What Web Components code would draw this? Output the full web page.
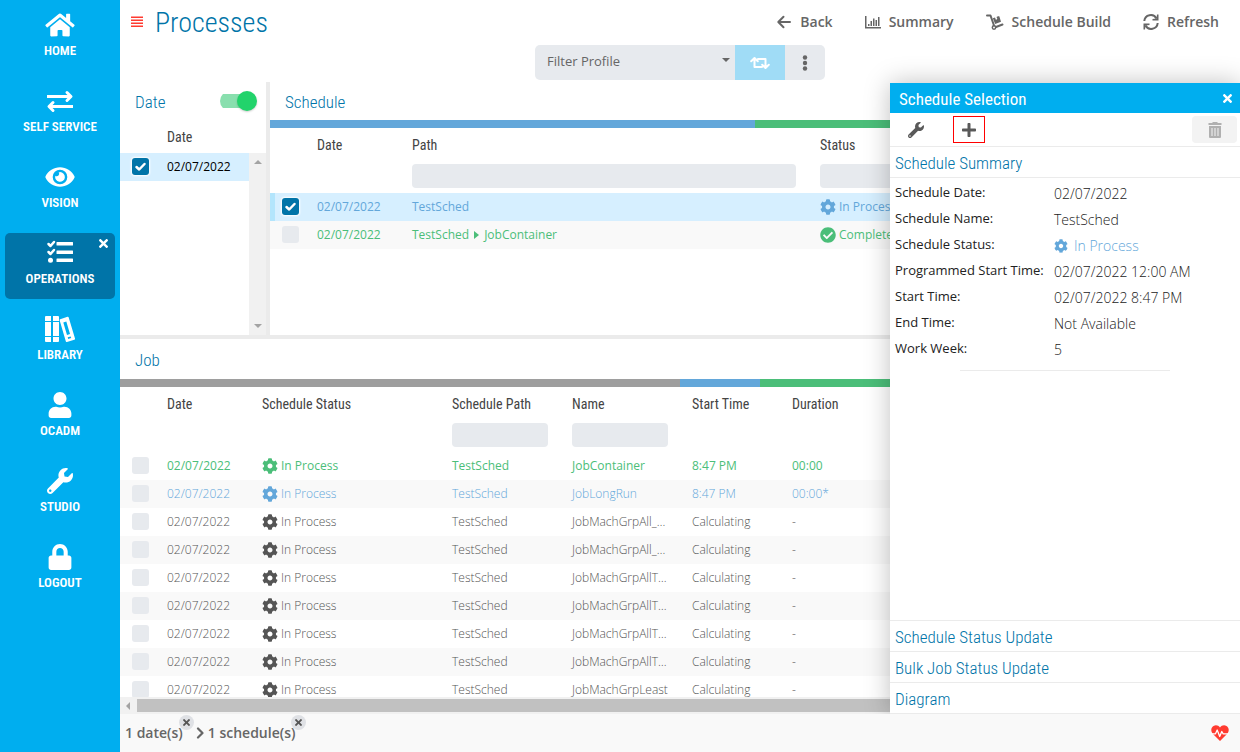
<!DOCTYPE html>
<html lang="en">
<head>
<meta charset="utf-8">
<title>Processes</title>
<meta name="viewport" content="width=device-width, initial-scale=1">
<style>
  html, body { margin: 0; height: 100%; }
  body {
    --head: "Roboto Condensed", "Liberation Sans Narrow", Roboto, sans-serif;
    --brand: #00aeef;
    --deep: #0074a8;
    --green: #4bbe79;
    --blue: #63a7da;
    --field: #e7eaee;
    --line: #ebebeb;
    --grey: #666;
    font-family: "Open Sans", sans-serif;
    font-size: 12px;
    color: #444;
    background: #fff;
  }
</style>
</head>
<body>
<process-app></process-app>
<script>
const ICONS = {
  home: ['0 0 576 512', '<path d="M280.37 148.26L96 300.11V464a16 16 0 0 0 16 16l112.06-.29a16 16 0 0 0 15.92-16V368a16 16 0 0 1 16-16h64a16 16 0 0 1 16 16v95.64a16 16 0 0 0 16 16.05L464 480a16 16 0 0 0 16-16V300L295.67 148.26a12.19 12.19 0 0 0-15.3 0zM571.6 251.47L488 182.56V44.05a12 12 0 0 0-12-12h-56a12 12 0 0 0-12 12v72.61L318.47 43a48 48 0 0 0-61 0L4.34 251.47a12 12 0 0 0-1.6 16.9l25.5 31A12 12 0 0 0 45.15 301l235.22-193.74a12.19 12.19 0 0 1 15.3 0L530.9 301a12 12 0 0 0 16.9-1.6l25.5-31a12 12 0 0 0-1.7-16.93z"/>'],
  swap: ['0 0 26 26', '<path fill="none" stroke="currentColor" stroke-width="3" d="M0 8.500H24M26 18.500H2"/><path fill="none" stroke="currentColor" stroke-width="3" stroke-linecap="round" stroke-linejoin="round" d="M20 4.500L24 8.500L20 12.500M6 14.500L2 18.500L6 22.500"/>'],
  eye: ['0 0 576 512', '<path d="M572.52 241.4C518.29 135.59 410.93 64 288 64S57.68 135.64 3.480 241.41a32.35 32.35 0 0 0 0 29.19C57.71 376.41 165.07 448 288 448s230.32-71.64 284.52-177.41a32.35 32.35 0 0 0 0-29.19zM288 400a144 144 0 1 1 144-144 143.93 143.93 0 0 1-144 144zm0-240a95.31 95.31 0 0 0-25.31 3.790 47.85 47.85 0 0 1-66.9 66.9A95.78 95.78 0 1 0 288 160z"/>'],
  tasks: ['0 0 26 26', '<path d="M10 2h15.500a.5.5 0 0 1 .5.5v2.500a.5.5 0 0 1-.5.5H10a.5.5 0 0 1-.5-.5V2.500a.5.5 0 0 1 .5-.5zM10 10.500h15.500a.5.5 0 0 1 .5.5v2.500a.5.5 0 0 1-.5.5H10a.5.5 0 0 1-.5-.5v-2.500a.5.5 0 0 1 .5-.5zM10 18.500h15.500a.5.5 0 0 1 .5.5v2.500a.5.5 0 0 1-.5.5H10a.5.5 0 0 1-.5-.5v-2.500a.5.5 0 0 1 .5-.5z"/><circle cx="3.500" cy="20.300" r="2.500"/><path fill="none" stroke="currentColor" stroke-width="2.500" stroke-linecap="round" stroke-linejoin="round" d="M1.500 4L3.500 6L7 2M1.500 12L3.500 14L7 10"/>'],
  books: ['0 0 30 26', '<path d="M1 0h5v5H0V1a1 1 0 0 1 1-1zM8 0h5a1 1 0 0 1 1 1v4H8zM0 6h6v14H0zM8 6h6v14H8zM0 21h6v5H1a1 1 0 0 1-1-1zM8 21h6v4a1 1 0 0 1-1 1H8z"/><path fill-rule="evenodd" d="M15.200 3.200L22.500 .7a1 1 0 0 1 1.200 .7L30 22.500a1 1 0 0 1-.7 1.200L22 26a1 1 0 0 1-1.200-.7L14.700 4.400a1 1 0 0 1 .5-1.200zM18.300 6.500l3.700 12.500 3-1-3.700-12.400zM22.700 21.300l.5 1.700 3-1-.5-1.600z"/>'],
  user: ['0 0 448 512', '<path d="M224 256c70.7 0 128-57.3 128-128S294.7 0 224 0 96 57.3 96 128s57.3 128 128 128zm89.6 32h-16.7c-22.2 10.2-46.9 16-72.9 16s-50.6-5.8-72.9-16h-16.7C60.2 288 0 348.2 0 422.4V464c0 26.5 21.5 48 48 48h352c26.5 0 48-21.5 48-48v-41.6c0-74.2-60.2-134.4-134.4-134.4z"/>'],
  wrench: ['0 0 512 512', '<path d="M507.73 109.1c-2.24-9.03-13.54-12.09-20.12-5.51l-74.36 74.36-67.88-11.31-11.31-67.88 74.36-74.36c6.62-6.62 3.43-17.9-5.66-20.16-47.38-11.74-99.55.91-136.58 37.93-39.64 39.64-50.55 97.1-34.05 147.2L18.74 402.76c-24.99 24.99-24.99 65.51 0 90.5 24.99 24.99 65.51 24.99 90.5 0l213.21-213.21c50.12 16.71 107.47 5.68 147.37-34.22 37.07-37.07 49.7-89.32 37.91-136.73zM64 472c-13.25 0-24-10.75-24-24 0-13.26 10.75-24 24-24s24 10.74 24 24c0 13.25-10.75 24-24 24z"/>'],
  lock: ['0 0 448 512', '<path d="M400 224h-24v-72C376 68.2 307.8 0 224 0S72 68.2 72 152v72H48c-26.5 0-48 21.5-48 48v192c0 26.5 21.5 48 48 48h352c26.5 0 48-21.5 48-48V272c0-26.5-21.5-48-48-48zm-104 0H152v-72c0-39.7 32.3-72 72-72s72 32.3 72 72v72z"/>'],
  cog: ['0 0 512 512', '<path d="M487.4 315.7l-42.6-24.6c4.3-23.2 4.3-47 0-70.2l42.6-24.6c4.9-2.8 7.1-8.6 5.5-14-11.1-35.6-30-67.8-54.7-94.6-3.8-4.1-10-5.1-14.8-2.3L380.8 110c-17.9-15.4-38.5-27.3-60.8-35.1V25.8c0-5.6-3.9-10.5-9.4-11.7-36.7-8.2-74.3-7.8-109.2 0-5.5 1.2-9.4 6.1-9.4 11.7V75c-22.2 7.9-42.8 19.8-60.8 35.1L88.7 85.5c-4.9-2.8-11-1.9-14.8 2.3-24.7 26.7-43.6 58.9-54.7 94.6-1.7 5.4.6 11.2 5.5 14L67.3 221c-4.3 23.2-4.3 47 0 70.2l-42.6 24.6c-4.9 2.8-7.1 8.6-5.5 14 11.1 35.6 30 67.8 54.7 94.6 3.8 4.1 10 5.1 14.8 2.3l42.6-24.6c17.9 15.4 38.5 27.3 60.8 35.1v49.2c0 5.6 3.9 10.5 9.4 11.7 36.7 8.2 74.3 7.8 109.2 0 5.5-1.2 9.4-6.1 9.4-11.7v-49.2c22.2-7.9 42.8-19.8 60.8-35.1l42.6 24.6c4.9 2.8 11 1.9 14.8-2.3 24.7-26.7 43.6-58.9 54.7-94.6 1.5-5.5-.7-11.3-5.6-14.1zM256 336c-44.1 0-80-35.9-80-80s35.9-80 80-80 80 35.9 80 80-35.9 80-80 80z"/>'],
  done: ['0 0 512 512', '<path d="M504 256c0 136.967-111.033 248-248 248S8 392.967 8 256 119.033 8 256 8s248 111.033 248 248zM227.314 387.314l184-184c6.248-6.248 6.248-16.379 0-22.627l-22.627-22.627c-6.248-6.249-16.379-6.249-22.628 0L216 308.118l-70.059-70.059c-6.248-6.248-16.379-6.248-22.628 0l-22.627 22.627c-6.248 6.248-6.248 16.379 0 22.627l104 104c6.249 6.249 16.379 6.249 22.628.001z"/>'],
  plus: ['0 0 448 512', '<path d="M416 208H272V64c0-17.67-14.33-32-32-32h-32c-17.67 0-32 14.33-32 32v144H32c-17.67 0-32 14.33-32 32v32c0 17.67 14.33 32 32 32h144v144c0 17.67 14.33 32 32 32h32c17.67 0 32-14.33 32-32V304h144c17.67 0 32-14.33 32-32v-32c0-17.67-14.33-32-32-32z"/>'],
  times: ['0 80 352 352', '<path d="M242.72 256l100.07-100.07c12.28-12.28 12.28-32.19 0-44.48l-22.24-22.24c-12.28-12.28-32.19-12.28-44.48 0L176 189.28 75.93 89.21c-12.28-12.28-32.19-12.28-44.48 0L9.21 111.45c-12.28 12.28-12.28 32.19 0 44.48L109.28 256 9.21 356.07c-12.28 12.28-12.28 32.19 0 44.48l22.24 22.24c12.28 12.28 32.2 12.28 44.48 0L176 322.72l100.07 100.07c12.28 12.28 32.2 12.28 44.48 0l22.24-22.24c12.28-12.28 12.28-32.19 0-44.48L242.72 256z"/>'],
  menu: ['0 0 12 12', '<path d="M0 .5h12v1.500H0zM0 3.500h12v1.500H0zM0 6.500h12v1.500H0zM0 9.500h12v1.500H0z"/>'],
  back: ['0 0 16 16', '<path fill="none" stroke="currentColor" stroke-width="2" stroke-linecap="round" stroke-linejoin="round" d="M2.500 8H14M7.500 2.800L2.300 8L7.500 13.200"/>'],
  chart: ['0 0 16 16', '<path d="M0 2h1.500v11H16v1.500H0zM3 10h1.500v2H3zM5.500 7H7v5H5.500zM8 4.500h1.500V12H8zM10.500 6H12v6h-1.500zM13 3h1.500v9H13z"/>'],
  dolly: ['0 0 18 16', '<path fill="none" stroke="currentColor" stroke-width="2" stroke-linecap="round" stroke-linejoin="round" d="M1 1.500H4.500L8 11.500M10 13L16.500 10.500"/><circle cx="8" cy="13.500" r="1.700" fill="none" stroke="currentColor" stroke-width="1.500"/><path d="M6.800 4.200L9 3.400l1 2.600 1.300-1.200L10.500 2.900 12 2.300l1.300 0L15 7.800 9.200 10z"/>'],
  refresh: ['0 0 16 16', '<path fill="none" stroke="currentColor" stroke-width="2" d="M1.300 7A6.500 6.500 0 0 1 13.500 4.500M14.700 9A6.500 6.500 0 0 1 2.500 11.500"/><path d="M15.500 .5V6.500H9.500V5L13.500 4.500L14 .5zM.5 15.500V9.500H6.500V11L2.500 11.500L2 15.500z"/>'],
  retweet: ['0 0 20 14', '<path fill="none" stroke="currentColor" stroke-width="2" stroke-linejoin="round" stroke-linecap="round" d="M4.500 3V11H12M1.200 5.200L4.500 2L7.800 5.200M8 3H15.500V11M12.200 8.800L15.500 12L18.800 8.800"/>'],
  dots: ['0 0 6 16', '<circle cx="3" cy="2.500" r="2.200"/><circle cx="3" cy="8" r="2.200"/><circle cx="3" cy="13.500" r="2.200"/>'],
  trash: ['0 0 14 16', '<path fill-rule="evenodd" d="M5 0h4l1 1h3.500v2H.5V1H4zM1 4h12v11a1 1 0 0 1-1 1H2a1 1 0 0 1-1-1zM3.500 6v8h1V6zM6.500 6v8h1V6zM9.500 6v8h1V6z"/>'],
  right: ['0 0 5 8', '<path d="M0 0L5 4L0 8z"/>'],
  up: ['0 0 8 4', '<path d="M0 4L4 0L8 4z"/>'],
  down: ['0 0 8 4', '<path d="M0 0H8L4 4z"/>'],
  left: ['0 0 4 8', '<path d="M4 0V8L0 4z"/>'],
  chevron: ['0 0 8 12', '<path fill="none" stroke="currentColor" stroke-width="2.200" stroke-linecap="round" stroke-linejoin="round" d="M2 1.500L6.500 6L2 10.500"/>'],
  heart: ['0 0 18 16', '<path d="M9 16L1.500 8.500C-.5 6 0 2.500 2.500 1C5-.5 7.500 .5 9 2.500C10.500 .5 13-.5 15.500 1C18 2.500 18.500 6 16.500 8.500z"/><path fill="none" stroke="#fff" stroke-width="1.300" stroke-linejoin="round" d="M0 8.800H4.500L6.200 5L8.700 11.500L10.800 6.500L12.200 8.800H18"/>']
};

class UiIcon extends HTMLElement {
  connectedCallback() {
    const [box, shape] = ICONS[this.getAttribute('name')];
    this.attachShadow({ mode: 'open' }).innerHTML = `
      <style>
        :host { display: inline-block; flex: none; width: 16px; height: 16px; }
        svg { display: block; width: 100%; height: 100%; fill: currentColor; }
      </style>
      <svg viewBox="${box}" aria-hidden="true">${shape}</svg>`;
  }
}
customElements.define('ui-icon', UiIcon);

class NavItem extends HTMLElement {
  connectedCallback() {
    const active = this.hasAttribute('active');
    this.attachShadow({ mode: 'open' }).innerHTML = `
      <style>
        :host { display: block; position: relative; }
        a {
          display: flex; flex-direction: column; align-items: center; gap: 3px;
          box-sizing: border-box; height: 66px; padding-top: 7px; border-radius: 5px;
          color: #fff; text-decoration: none;
          font: 600 13px/20px var(--head); text-transform: uppercase;
        }
        :host([active]) a { background: var(--deep); }
        ui-icon { width: 30px; height: 26px; }
        button { position: absolute; top: 6px; right: 7px; border: 0; padding: 0; background: none; color: #fff; }
        button ui-icon { display: block; width: 9px; height: 9px; }
      </style>
      <a href="#"><ui-icon name="${this.getAttribute('icon')}"></ui-icon><span><slot></slot></span></a>
      ${active ? '<button aria-label="Close"><ui-icon name="times"></ui-icon></button>' : ''}`;
  }
}
customElements.define('nav-item', NavItem);

class SideNav extends HTMLElement {
  connectedCallback() {
    this.attachShadow({ mode: 'open' }).innerHTML = `
      <style>
        :host { display: block; background: var(--brand); }
        nav { display: flex; flex-direction: column; gap: 10px; padding: 5px; }
      </style>
      <nav><slot></slot></nav>`;
  }
}
customElements.define('side-nav', SideNav);

class ToolLink extends HTMLElement {
  connectedCallback() {
    this.attachShadow({ mode: 'open' }).innerHTML = `
      <style>
        :host { display: block; }
        button {
          display: flex; align-items: center; gap: 8px; border: 0; padding: 0 16px;
          background: none; color: var(--grey); font: 600 14px/20px "Open Sans", sans-serif;
        }
        ui-icon[name=dolly] { width: 18px; }
      </style>
      <button><ui-icon name="${this.getAttribute('icon')}"></ui-icon><slot></slot></button>`;
  }
}
customElements.define('tool-link', ToolLink);

class PageHeader extends HTMLElement {
  connectedCallback() {
    this.attachShadow({ mode: 'open' }).innerHTML = `
      <style>
        :host { display: block; height: 82px; }
        .top { display: flex; align-items: center; box-sizing: border-box; height: 45px; padding: 0 5px 1px 11px; }
        .menu { border: 0; padding: 0; margin-right: 12px; background: none; color: #ff3b30; }
        .menu ui-icon { display: block; width: 12px; height: 12px; }
        h1 { margin: 0; padding-top: 2px; font: 300 28px/40px var(--head); color: var(--deep); }
        .tools { display: flex; margin-left: auto; }
        .filter { display: flex; width: 290px; height: 35px; margin: 0 auto; border-radius: 5px; overflow: hidden; background: var(--field); color: var(--grey); }
        .pick { position: relative; flex: 1; }
        select {
          appearance: none; width: 100%; height: 100%; border: 0; margin: 0; padding: 0 12px 3px; border-radius: 0;
          background: none; color: inherit; font: 400 13px/20px "Open Sans", sans-serif;
        }
        .pick ui-icon { position: absolute; right: 5px; top: 13px; width: 8px; height: 4px; }
        .filter button { display: grid; place-items: center; border: 0; padding: 0; background: none; color: inherit; }
        .apply { width: 50px; }
        .filter .apply { background: #a0dcf6; color: #fff; }
        .apply ui-icon { width: 20px; height: 14px; }
        .more { width: 40px; }
      </style>
      <div class="top">
        <button class="menu" aria-label="Menu"><ui-icon name="menu"></ui-icon></button>
        <h1>Processes</h1>
        <div class="tools">
          <tool-link icon="back">Back</tool-link>
          <tool-link icon="chart">Summary</tool-link>
          <tool-link icon="dolly">Schedule Build</tool-link>
          <tool-link icon="refresh">Refresh</tool-link>
        </div>
      </div>
      <div class="filter">
        <div class="pick">
          <select aria-label="Filter Profile"><option>Filter Profile</option></select>
          <ui-icon name="down"></ui-icon>
        </div>
        <button class="apply" aria-label="Apply"><ui-icon name="retweet"></ui-icon></button>
        <button class="more" aria-label="More"><ui-icon name="dots"></ui-icon></button>
      </div>`;
  }
}
customElements.define('page-header', PageHeader);

class ToggleSwitch extends HTMLElement {
  connectedCallback() {
    this.attachShadow({ mode: 'open' }).innerHTML = `
      <style>
        :host { display: block; }
        input {
          appearance: none; display: flex; align-items: center; justify-content: flex-end;
          width: 37px; height: 20px; margin: 0;
          background: linear-gradient(#89dfae, #89dfae) left center / 32px 14px no-repeat; border-radius: 10px;
        }
        input::before { content: ""; width: 20px; height: 20px; border-radius: 50%; background: #22d36b; box-shadow: 0 1px 2px rgba(0,0,0,.2); }
      </style>
      <input type="checkbox" role="switch" aria-label="${this.getAttribute('label')}" checked>`;
  }
}
customElements.define('toggle-switch', ToggleSwitch);

class StatusBar extends HTMLElement {
  connectedCallback() {
    const parts = this.getAttribute('parts').split(' ').map(p => p.split(':'));
    this.attachShadow({ mode: 'open' }).innerHTML = `
      <style>:host { display: flex; height: 8px; flex: none; }</style>
      ${parts.map(([n, c]) => `<div style="flex:${n};background:${c}"></div>`).join('')}`;
  }
}
customElements.define('status-bar', StatusBar);

class DataGrid extends HTMLElement {
  connectedCallback() {
    const { cols, rows } = GRIDS[this.getAttribute('source')];
    const filters = cols.some(c => c.filter);
    const check = r => `<td><input type="checkbox" aria-label="Select row" ${r.checked ? 'checked' : ''}></td>`;
    this.attachShadow({ mode: 'open' }).innerHTML = `
      <style>
        :host { display: block; }
        table { width: 100%; table-layout: fixed; border-collapse: collapse; }
        th, td { padding: 0 12px; text-align: left; white-space: nowrap; }
        th { height: 33px; font: 400 14px/20px var(--head); color: #444; }
        .filters td { height: 31px; padding-bottom: 4px; box-sizing: border-box; }
        .filtered th { height: 34px; }
        .filters input { display: block; box-sizing: border-box; width: 100%; height: 24px; border: 0; padding: 0 8px; border-radius: 4px; background: var(--field); font: 12px/20px "Open Sans", sans-serif; }
        tbody tr { height: 28px; font-size: 12px; line-height: 20px; }
        tbody tr:nth-child(even) { background: #f9f9f9; }
        tbody tr.checked { background: #d6efff; }
        tbody td:first-child { padding-right: 0; }
        tr.current td:first-child { background: linear-gradient(#b3e5fc, #b3e5fc) left / 5px 100% no-repeat; }
        .green { color: var(--green); }
        .blue { color: var(--blue); }
        .dark { color: #555; }
        .black { color: #000; }
        .thin { font-weight: 300; }
        input[type=checkbox] { appearance: none; display: block; width: 17px; height: 17px; margin: 0 0 2px; border-radius: 3px; background: var(--field); }
        input[type=checkbox]:checked {
          background: var(--deep) url('data:image/svg+xml,<svg xmlns="http://www.w3.org/2000/svg" viewBox="0 0 17 17"><path fill="none" stroke="white" stroke-width="2.500" stroke-linecap="round" stroke-linejoin="round" d="M4.500 9L7.200 11.500L12.500 6"/></svg>') center / 17px;
          box-shadow: 0 0 2px 1px #fff;
        }
        .cell { display: flex; align-items: center; gap: 3px; }
        .path { gap: 5px; }
        .path ui-icon { width: 5px; height: 8px; }
      </style>
      <table class="${filters ? 'filtered' : ''}">
        <colgroup><col style="width:35px">${cols.map(c => `<col ${c.w ? `style="width:${c.w}px"` : ''}>`).join('')}</colgroup>
        <thead>
          <tr><th></th>${cols.map(c => `<th scope="col">${c.name}</th>`).join('')}</tr>
          ${filters ? `<tr class="filters"><td></td>${cols.map(c => `<td>${c.filter ? `<input type="text" aria-label="Filter ${c.name}">` : ''}</td>`).join('')}</tr>` : ''}
        </thead>
        <tbody>${rows.map(r => `<tr class="${r.tone} ${r.checked ? 'checked' : ''} ${r.current ? 'current' : ''}">${check(r)}${r.cells.map(c => `<td>${c}</td>`).join('')}</tr>`).join('')}</tbody>
      </table>`;
  }
}
const status = (icon, text) => `<span class="cell"><ui-icon name="${icon}"></ui-icon>${text}</span>`;
const job = (tone, name, start = 'Calculating', time = '-') =>
  ({ tone, cells: ['02/07/2022', status('cog', 'In Process'), 'TestSched', name, start, time] });
const GRIDS = {
  dates: {
    cols: [{ name: 'Date' }],
    rows: [{ tone: 'black', checked: true, cells: ['02/07/2022'] }]
  },
  schedules: {
    cols: [{ name: 'Date', w: 95 }, { name: 'Path', w: 408, filter: true }, { name: 'Status', filter: true }],
    rows: [
      { tone: 'blue', checked: true, current: true, cells: ['02/07/2022', 'TestSched', status('cog', 'In Process')] },
      { tone: 'green', cells: ['02/07/2022', '<span class="cell path">TestSched<ui-icon name="right"></ui-icon>JobContainer</span>', status('done', 'Completed')] }
    ]
  },
  jobs: {
    cols: [{ name: 'Date', w: 95 }, { name: 'Schedule Status', w: 190 }, { name: 'Schedule Path', w: 120, filter: true }, { name: 'Name', w: 120, filter: true }, { name: 'Start Time', w: 100 }, { name: 'Duration' }],
    rows: [
      job('green', 'JobContainer', '8:47 PM', '00:00'),
      job('blue thin', 'JobLongRun', '8:47 PM', '00:00*'),
      job('dark thin', 'JobMachGrpAll_…'),
      job('dark thin', 'JobMachGrpAll_…'),
      job('dark thin', 'JobMachGrpAllT…'),
      job('dark thin', 'JobMachGrpAllT…'),
      job('dark thin', 'JobMachGrpAllT…'),
      job('dark thin', 'JobMachGrpAllT…'),
      job('dark thin', 'JobMachGrpLeast')
    ]
  }
};
customElements.define('data-grid', DataGrid);

class GridPane extends HTMLElement {
  connectedCallback() {
    this.attachShadow({ mode: 'open' }).innerHTML = `
      <style>
        :host { display: flex; flex-direction: column; min-width: 0; min-height: 0; overflow: hidden; }
        header { display: flex; flex: none; align-items: center; justify-content: space-between; height: 38px; padding: 0 9px 0 15px; }
        :host([roomy]) header { height: 40px; }
        h2 { margin: 0; padding-top: 2px; font: 300 17px/24px var(--head); color: var(--deep); }
      </style>
      <header><h2>${this.getAttribute('heading')}</h2><slot name="action"></slot></header>
      <slot></slot>`;
  }
}
customElements.define('grid-pane', GridPane);

class SelectionPanel extends HTMLElement {
  connectedCallback() {
    const facts = [
      ['Schedule Date:', '02/07/2022'], ['Schedule Name:', 'TestSched'],
      ['Schedule Status:', '<span class="state"><ui-icon name="cog"></ui-icon>In Process</span>'],
      ['Programmed Start Time:', '02/07/2022 12:00 AM'], ['Start Time:', '02/07/2022 8:47 PM'],
      ['End Time:', 'Not Available'], ['Work Week:', '5']
    ];
    this.attachShadow({ mode: 'open' }).innerHTML = `
      <style>
        :host { display: flex; flex-direction: column; background: #fff; box-shadow: 0 0 24px rgba(0,0,0,.25); }
        header { display: flex; flex: none; align-items: center; justify-content: space-between; height: 30px; padding: 0 8px 0 9px; background: var(--brand); color: #fff; }
        h2, h3 { margin: 0; padding-top: 2px; font: 400 17px/28px var(--head); }
        button { display: grid; place-items: center; border: 0; padding: 0; background: none; color: inherit; }
        header ui-icon { width: 9px; height: 9px; }
        .bar { display: flex; align-items: center; height: 33px; padding: 0 3px; border-bottom: 1px solid var(--line); color: #595959; }
        .bar button { box-sizing: border-box; width: 45px; height: 27px; border-radius: 4px; }
        .bar .add { width: 32px; margin-left: 15px; border: 1px solid #f00; border-radius: 0; }
        .add ui-icon { width: 14px; height: 16px; }
        .bar .remove { margin-left: auto; background: #f3f3f3; color: #b0b0b0; }
        h3 { padding-left: 5px; font-weight: 300; color: var(--deep); border-bottom: 1px solid var(--line); }
        dl { display: grid; grid-template-columns: 159px 1fr; grid-auto-rows: 26px; margin: 0; padding: 0 5px; color: #222; }
        dt { font-size: 13px; line-height: 28px; white-space: nowrap; }
        dd { margin: 0; font-weight: 300; font-size: 14px; line-height: 32px; }
        .state { display: flex; align-items: center; gap: 6px; color: var(--blue); }
        .state ui-icon { width: 14px; height: 14px; }
        hr { width: 60%; margin: 10px auto 0; border: 0; border-top: 1px solid var(--line); }
        .more { margin-top: auto; border-top: 1px solid var(--line); }
      </style>
      <header><h2>Schedule Selection</h2><button aria-label="Close"><ui-icon name="times"></ui-icon></button></header>
      <div class="bar">
        <button aria-label="Tools"><ui-icon name="wrench"></ui-icon></button>
        <button class="add" aria-label="Add"><ui-icon name="plus"></ui-icon></button>
        <button class="remove" aria-label="Delete" disabled><ui-icon name="trash"></ui-icon></button>
      </div>
      <h3>Schedule Summary</h3>
      <dl>${facts.map(([k, v]) => `<dt>${k}</dt><dd>${v}</dd>`).join('')}</dl>
      <hr>
      <div class="more">
        <h3>Schedule Status Update</h3>
        <h3>Bulk Job Status Update</h3>
        <h3>Diagram</h3>
      </div>`;
  }
}
customElements.define('selection-panel', SelectionPanel);

class CrumbChip extends HTMLElement {
  connectedCallback() {
    this.attachShadow({ mode: 'open' }).innerHTML = `
      <style>
        :host { position: relative; display: block; margin-right: 13px; }
        button { position: absolute; top: -8px; right: -11px; display: grid; place-items: center; width: 15px; height: 15px; border: 0; padding: 0; border-radius: 50%; background: #dfe1e5; color: #555; }
        ui-icon { width: 7px; height: 7px; }
      </style>
      <slot></slot><button aria-label="Clear"><ui-icon name="times"></ui-icon></button>`;
  }
}
customElements.define('crumb-chip', CrumbChip);

class PageFooter extends HTMLElement {
  connectedCallback() {
    this.attachShadow({ mode: 'open' }).innerHTML = `
      <style>
        :host { display: flex; align-items: center; height: 38px; padding: 0 11px 0 5px; background: #f9f9f9; color: var(--grey); font-weight: 600; font-size: 14px; line-height: 20px; }
        .sep { width: 8px; height: 12px; margin-right: 4px; }
        .heart { width: 18px; height: 16px; margin-left: auto; color: #ff3b30; }
      </style>
      <crumb-chip>1 date(s)</crumb-chip>
      <ui-icon class="sep" name="chevron"></ui-icon>
      <crumb-chip>1 schedule(s)</crumb-chip>
      <ui-icon class="heart" name="heart"></ui-icon>`;
  }
}
customElements.define('page-footer', PageFooter);

class ProcessApp extends HTMLElement {
  connectedCallback() {
    this.attachShadow({ mode: 'open' }).innerHTML = `
      <style>
        :host { display: grid; grid-template-columns: 120px 1fr; height: 100vh; overflow: hidden; }
        main { display: flex; flex-direction: column; min-width: 0; min-height: 0; }
        .work { position: relative; flex: 1; min-height: 0; display: grid; grid-template-rows: 257px 1fr; }
        .upper { display: grid; grid-template-columns: 150px 1fr; min-height: 0; border-bottom: 4px solid #ebebeb; }
        .dates { border-right: 4px solid #ebebeb; }
        .scroller { flex: 1; display: grid; grid-template-columns: 1fr 17px; grid-template-rows: 33px 1fr; min-height: 0; }
        .scroller data-grid { grid-area: 1 / 1 / 3 / 2; }
        .vbar { grid-area: 2 / 2; display: flex; flex-direction: column; justify-content: space-between; align-items: center; padding: 7px 0; background: #f1f1f1; color: #a3a3a3; }
        .vbar ui-icon { width: 8px; height: 4px; }
        .hbar { display: flex; flex: none; align-items: center; height: 17px; background: #f1f1f1; color: #a3a3a3; }
        .hbar ui-icon { width: 4px; height: 8px; margin: 0 7px 0 6px; }
        .thumb { flex: 1; height: 13px; background: #c1c1c1; }
        .jobs { flex: 1; min-height: 0; overflow: hidden; }
        selection-panel { position: absolute; top: 1px; right: 0; bottom: 0; width: 350px; }
        page-footer { position: relative; }
      </style>
      <side-nav>
        <nav-item icon="home">Home</nav-item>
        <nav-item icon="swap">Self Service</nav-item>
        <nav-item icon="eye">Vision</nav-item>
        <nav-item icon="tasks" active>Operations</nav-item>
        <nav-item icon="books">Library</nav-item>
        <nav-item icon="user">OCADM</nav-item>
        <nav-item icon="wrench">Studio</nav-item>
        <nav-item icon="lock">Logout</nav-item>
      </side-nav>
      <main>
        <page-header></page-header>
        <div class="work">
          <div class="upper">
            <grid-pane class="dates" heading="Date">
              <toggle-switch slot="action" label="Date filter"></toggle-switch>
              <div class="scroller">
                <data-grid source="dates"></data-grid>
                <div class="vbar"><ui-icon name="up"></ui-icon><ui-icon name="down"></ui-icon></div>
              </div>
            </grid-pane>
            <grid-pane heading="Schedule">
              <status-bar parts="1:#63a7da 1:#4bbe79"></status-bar>
              <data-grid source="schedules"></data-grid>
            </grid-pane>
          </div>
          <grid-pane heading="Job" roomy>
            <status-bar parts="7:#9e9e9e 1:#63a7da 6:#4bbe79"></status-bar>
            <data-grid class="jobs" source="jobs"></data-grid>
            <div class="hbar"><ui-icon name="left"></ui-icon><div class="thumb"></div></div>
          </grid-pane>
          <selection-panel></selection-panel>
        </div>
        <page-footer></page-footer>
      </main>`;
  }
}
customElements.define('process-app', ProcessApp);
</script>
</body>
</html>
